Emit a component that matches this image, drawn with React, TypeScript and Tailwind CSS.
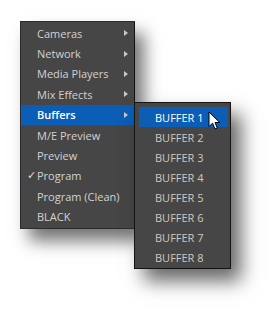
import React from "react";

const mainItems: { label: string; arrow?: boolean; active?: boolean; check?: boolean }[] = [
  { label: "Cameras", arrow: true },
  { label: "Network", arrow: true },
  { label: "Media Players", arrow: true },
  { label: "Mix Effects", arrow: true },
  { label: "Buffers", arrow: true, active: true },
  { label: "M/E Preview" },
  { label: "Preview" },
  { label: "Program", check: true },
  { label: "Program (Clean)" },
  { label: "BLACK" },
];

const buffers = ["BUFFER 1", "BUFFER 2", "BUFFER 3", "BUFFER 4", "BUFFER 5", "BUFFER 6", "BUFFER 7", "BUFFER 8"];

function Arrow() {
  return (
    <svg width="4" height="6" viewBox="0 0 4 6" className="absolute right-[6px] top-1/2 -translate-y-1/2">
      <path d="M0 0 L4 3 L0 6 Z" fill="#c8c8c8" />
    </svg>
  );
}

export default function App() {
  return (
    <div className="w-[272px] h-[309px] bg-white" style={{ fontFamily: '"Open Sans", "Noto Sans", sans-serif' }}>
      <div className="relative pt-[21px] pl-[20px]">
        <div className="w-[115px] bg-[#464646] border border-[#2c2c2c] border-r-[#111] py-[1px] shadow-[9px_12px_16px_rgba(0,0,0,0.55)]">
          {mainItems.map((it) => (
            <div
              key={it.label}
              className={
                "relative h-[20.4px] flex items-center pl-[16px] text-[11px] leading-none " +
                (it.active ? "bg-[#0b5db6] text-white font-semibold" : "text-[#d2d2d2] font-medium")
              }
            >
              {it.check && (
                <span className="absolute left-[6px] text-[11px] text-[#dcdcdc]" style={{ fontFamily: '"DejaVu Sans", sans-serif' }}>
                  ✓
                </span>
              )}
              <span>{it.label}</span>
              {it.arrow && <Arrow />}
            </div>
          ))}
        </div>

        <div className="absolute left-[134px] top-[102px] w-[97px] bg-[#464646] border border-[#141414] pt-[4px] pb-[1px] pl-[4px] pr-[2px] shadow-[10px_12px_18px_rgba(0,0,0,0.6)]">
          {buffers.map((b, i) => (
            <div
              key={b}
              className={
                "h-[20px] flex items-center pl-[16px] text-[11px] leading-none font-medium " +
                (i === 0 ? "bg-[#0b5db6] text-white" : "text-[#cfc8bd]")
              }
            >
              {b}
            </div>
          ))}
        </div>

        <svg
          className="absolute left-[208px] top-[111px]"
          width="13"
          height="20"
          viewBox="0 0 13 20"
        >
          <path
            d="M1 1 L1 15.5 L4.6 12.2 L7 18 L9.3 17 L7 11.5 L11.8 11.5 Z"
            fill="#ffffff"
            stroke="#000000"
            strokeWidth="1"
            strokeLinejoin="round"
          />
        </svg>
      </div>
    </div>
  );
}
